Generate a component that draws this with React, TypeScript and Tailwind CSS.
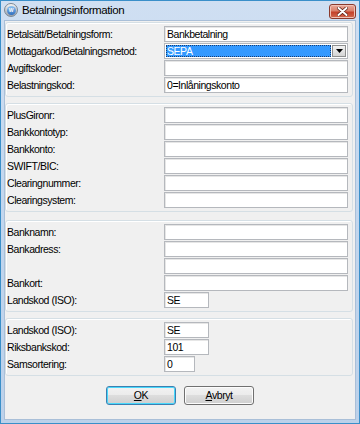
import React from "react";

const LBL = "font-['Liberation_Sans',Arial,sans-serif] text-[10.5px] tracking-[-0.45px] text-black leading-none";

function Input({ value = "", w = "w-[184px]" }: { value?: string; w?: string }) {
  return (
    <div
      className={`${w} h-[16px] bg-white border border-[#b5b8bd] shadow-[inset_1px_1px_0_#e6e6e6] flex items-center pl-[2px] ${LBL}`}
    >
      {value}
    </div>
  );
}

function Select() {
  return (
    <div className="w-[184px] h-[16px] bg-white border border-[#b5b8bd] flex items-center p-[1px]">
      <div className="flex-1 h-full bg-[#3399ff] outline outline-1 outline-dotted outline-[#1a3d70] -outline-offset-1 flex items-center pl-[1px]">
        <span className={`${LBL} !text-white`}>SEPA</span>
      </div>
      <div className="w-[14px] h-full ml-[1px] border border-[#8e8f8f] bg-gradient-to-b from-[#f2f2f2] to-[#d4d4d4] flex items-center justify-center">
        <svg width="7" height="4" viewBox="0 0 7 4">
          <path d="M0 0 H7 L3.5 4 Z" fill="#000" />
        </svg>
      </div>
    </div>
  );
}

function Row({ label, children }: { label: string; children?: React.ReactNode }) {
  return (
    <div className="flex items-center h-[16px]">
      <span className={`w-[157px] ${LBL}`}>{label}</span>
      {children}
    </div>
  );
}

function Group({ children, mt }: { children: React.ReactNode; mt: string }) {
  return (
    <div
      className={`${mt} ml-0 mr-[2px] border border-[#d5dfe5] rounded-[3px] shadow-[inset_1px_1px_0_#ffffff] pt-[3px] pb-[3px] pl-[1px] pr-[4px] flex flex-col gap-[1px]`}
    >
      {children}
    </div>
  );
}

function Button({ children, def }: { children: React.ReactNode; def?: boolean }) {
  return (
    <div
      className={`w-[70px] h-[19px] rounded-[3px] border ${
        def ? "border-[#3c7fb1] shadow-[inset_0_0_0_1px_#48d8fb]" : "border-[#707070] shadow-[inset_0_0_0_1px_#fcfcfc]"
      } bg-[linear-gradient(to_bottom,#f2f2f2_0%,#ebebeb_50%,#dddddd_50%,#cfcfcf_100%)] flex items-center justify-center ${LBL}`}
    >
      {children}
    </div>
  );
}

export default function App() {
  return (
    <div className="w-[360px] h-[424px] flex flex-col border border-[#3a8fc9] bg-gradient-to-b from-[#cfdff2] via-[#c2d6ee] to-[#bcd1ea]">
      <div className="h-[19px] flex items-start shrink-0">
        <div className="ml-[3px] mt-[2px] w-[14px] h-[14px] rounded-full bg-gradient-to-b from-[#f4f4f4] to-[#9aa3ad] border border-[#7b8794] flex items-center justify-center">
          <div className="w-[9px] h-[9px] rounded-full bg-gradient-to-b from-[#8fc3f0] to-[#2f6fc0] flex items-center justify-center">
            <span className="text-white text-[5px] leading-none font-bold font-['Liberation_Sans',Arial,sans-serif]">W</span>
          </div>
        </div>
        <span className="ml-[4px] mt-[4px] font-['Liberation_Sans',Arial,sans-serif] text-[11.5px] tracking-[-0.4px] leading-none text-black">
          Betalningsinformation
        </span>
        <div className="ml-auto mr-[3px] mt-[3px] w-[27px] h-[15px] rounded-[3px] border border-[#8b3a2c] bg-[linear-gradient(to_bottom,#e9a99a_0%,#d9806b_45%,#c4412a_55%,#d26a4f_100%)] shadow-[inset_0_0_0_1px_#f0c2b6] flex items-center justify-center">
          <svg width="11" height="9" viewBox="0 0 11 9">
            <path d="M1.5 1 L9.5 8 M9.5 1 L1.5 8" stroke="#5a1d12" strokeWidth="3.4" strokeLinecap="round" />
            <path d="M1.5 1 L9.5 8 M9.5 1 L1.5 8" stroke="#ffffff" strokeWidth="2" strokeLinecap="round" />
          </svg>
        </div>
      </div>
      <div className="flex-1 mx-[3px] mb-[3px] bg-[#f0f0f0] border border-[#a9bfd8] flex flex-col">
        <Group mt="mt-[1px]">
          <Row label="Betalsätt/Betalningsform:">
            <Input value="Bankbetalning" />
          </Row>
          <Row label="Mottagarkod/Betalningsmetod:">
            <Select />
          </Row>
          <Row label="Avgiftskoder:">
            <Input />
          </Row>
          <Row label="Belastningskod:">
            <Input value="0=Inlåningskonto" />
          </Row>
        </Group>
        <Group mt="mt-[6px]">
          <Row label="PlusGironr:">
            <Input />
          </Row>
          <Row label="Bankkontotyp:">
            <Input />
          </Row>
          <Row label="Bankkonto:">
            <Input />
          </Row>
          <Row label="SWIFT/BIC:">
            <Input />
          </Row>
          <Row label="Clearingnummer:">
            <Input />
          </Row>
          <Row label="Clearingsystem:">
            <Input />
          </Row>
        </Group>
        <Group mt="mt-[8px]">
          <Row label="Banknamn:">
            <Input />
          </Row>
          <Row label="Bankadress:">
            <Input />
          </Row>
          <Row label="">
            <Input />
          </Row>
          <Row label="Bankort:">
            <Input />
          </Row>
          <Row label="Landskod (ISO):">
            <Input value="SE" w="w-[45px]" />
          </Row>
        </Group>
        <Group mt="mt-[6px]">
          <Row label="Landskod (ISO):">
            <Input value="SE" w="w-[45px]" />
          </Row>
          <Row label="Riksbankskod:">
            <Input value="101" w="w-[45px]" />
          </Row>
          <Row label="Samsortering:">
            <Input value="0" w="w-[31px]" />
          </Row>
        </Group>
        <div className="mt-[10px] flex justify-center gap-[8px]">
          <Button def>
            <span className="underline">O</span>K
          </Button>
          <Button>
            <span className="underline">A</span>vbryt
          </Button>
        </div>
      </div>
    </div>
  );
}
